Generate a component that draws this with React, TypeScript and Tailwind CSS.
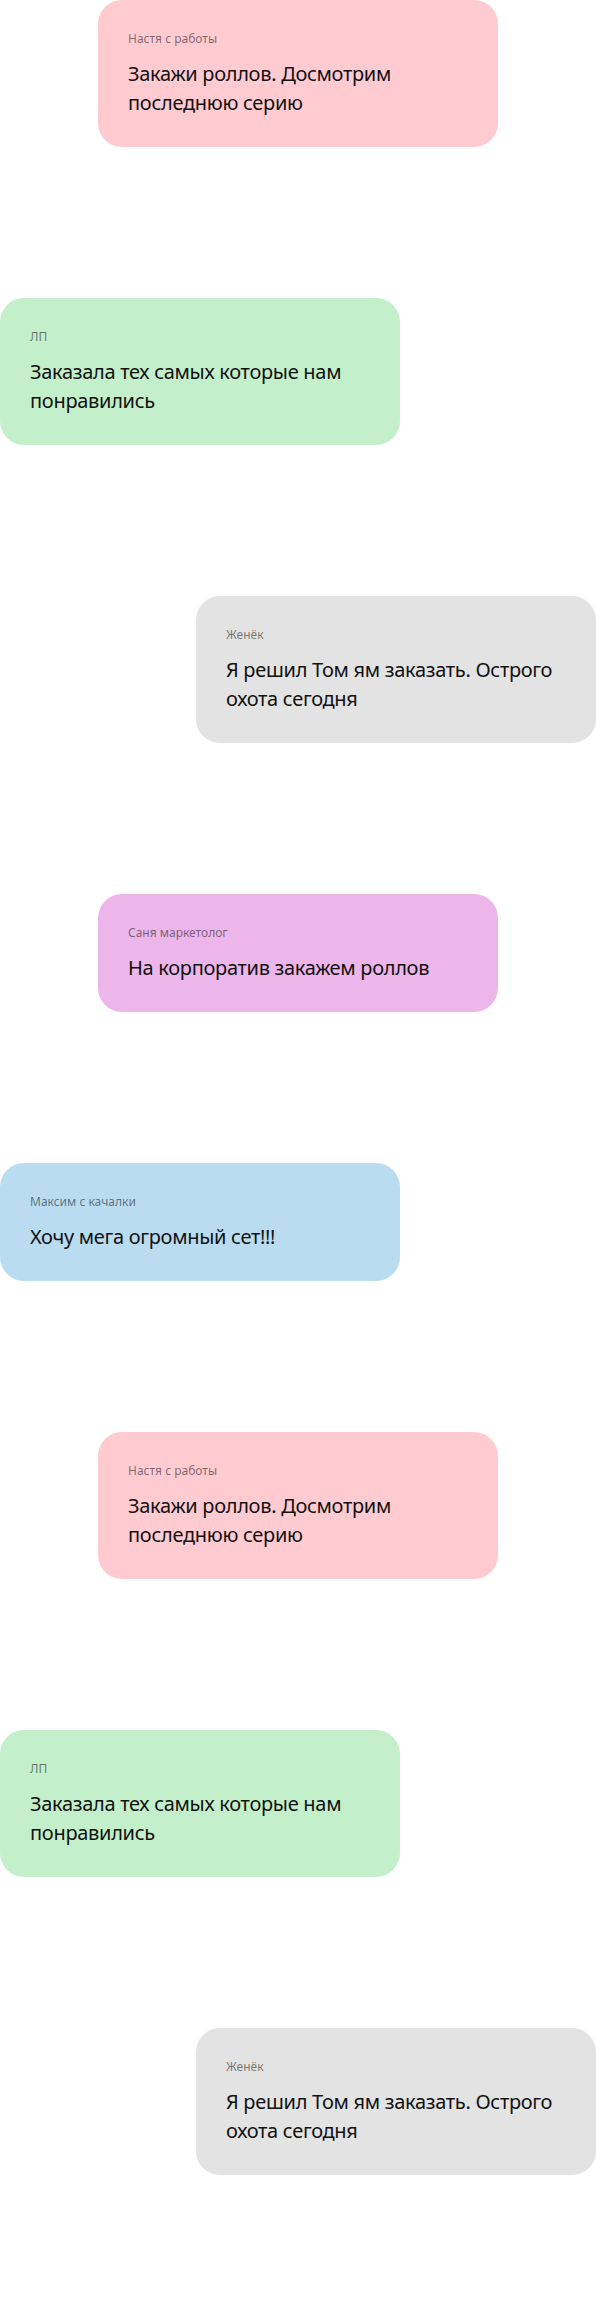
import React from 'react';

type Msg = {
  name: string;
  text: string;
  bg: string;
  align: 'left' | 'center' | 'right';
};

const messages: Msg[] = [
  { name: 'Настя с работы', text: 'Закажи роллов. Досмотрим последнюю серию', bg: 'bg-[#ffcbd1]', align: 'center' },
  { name: 'ЛП', text: 'Заказала тех самых которые нам понравились', bg: 'bg-[#c4efcb]', align: 'left' },
  { name: 'Женёк', text: 'Я решил Том ям заказать. Острого охота сегодня', bg: 'bg-[#e3e3e3]', align: 'right' },
  { name: 'Саня маркетолог', text: 'На корпоратив закажем роллов', bg: 'bg-[#edb6ea]', align: 'center' },
  { name: 'Максим с качалки', text: 'Хочу мега огромный сет!!!', bg: 'bg-[#badcf1]', align: 'left' },
  { name: 'Настя с работы', text: 'Закажи роллов. Досмотрим последнюю серию', bg: 'bg-[#ffcbd1]', align: 'center' },
  { name: 'ЛП', text: 'Заказала тех самых которые нам понравились', bg: 'bg-[#c4efcb]', align: 'left' },
  { name: 'Женёк', text: 'Я решил Том ям заказать. Острого охота сегодня', bg: 'bg-[#e3e3e3]', align: 'right' },
];

const alignClass = {
  left: 'justify-start',
  center: 'justify-center',
  right: 'justify-end',
};

const Bubble: React.FC<{ msg: Msg }> = ({ msg }) => (
  <div className={`flex ${alignClass[msg.align]} mb-[151px]`}>
    <div className={`w-[400px] rounded-3xl px-[30px] pt-[31px] pb-[30px] ${msg.bg}`}>
      <div className="text-[12px] leading-[16px] text-black/50">{msg.name}</div>
      <div className="mt-[12px] text-[20px] leading-[29px] tracking-[-0.3px] text-[#111]">{msg.text}</div>
    </div>
  </div>
);

export default function App() {
  return (
    <div className="w-[596px] bg-white" style={{ fontFamily: '"Noto Sans", "Open Sans", sans-serif' }}>
      {messages.map((m, i) => (
        <Bubble key={i} msg={m} />
      ))}
    </div>
  );
}
